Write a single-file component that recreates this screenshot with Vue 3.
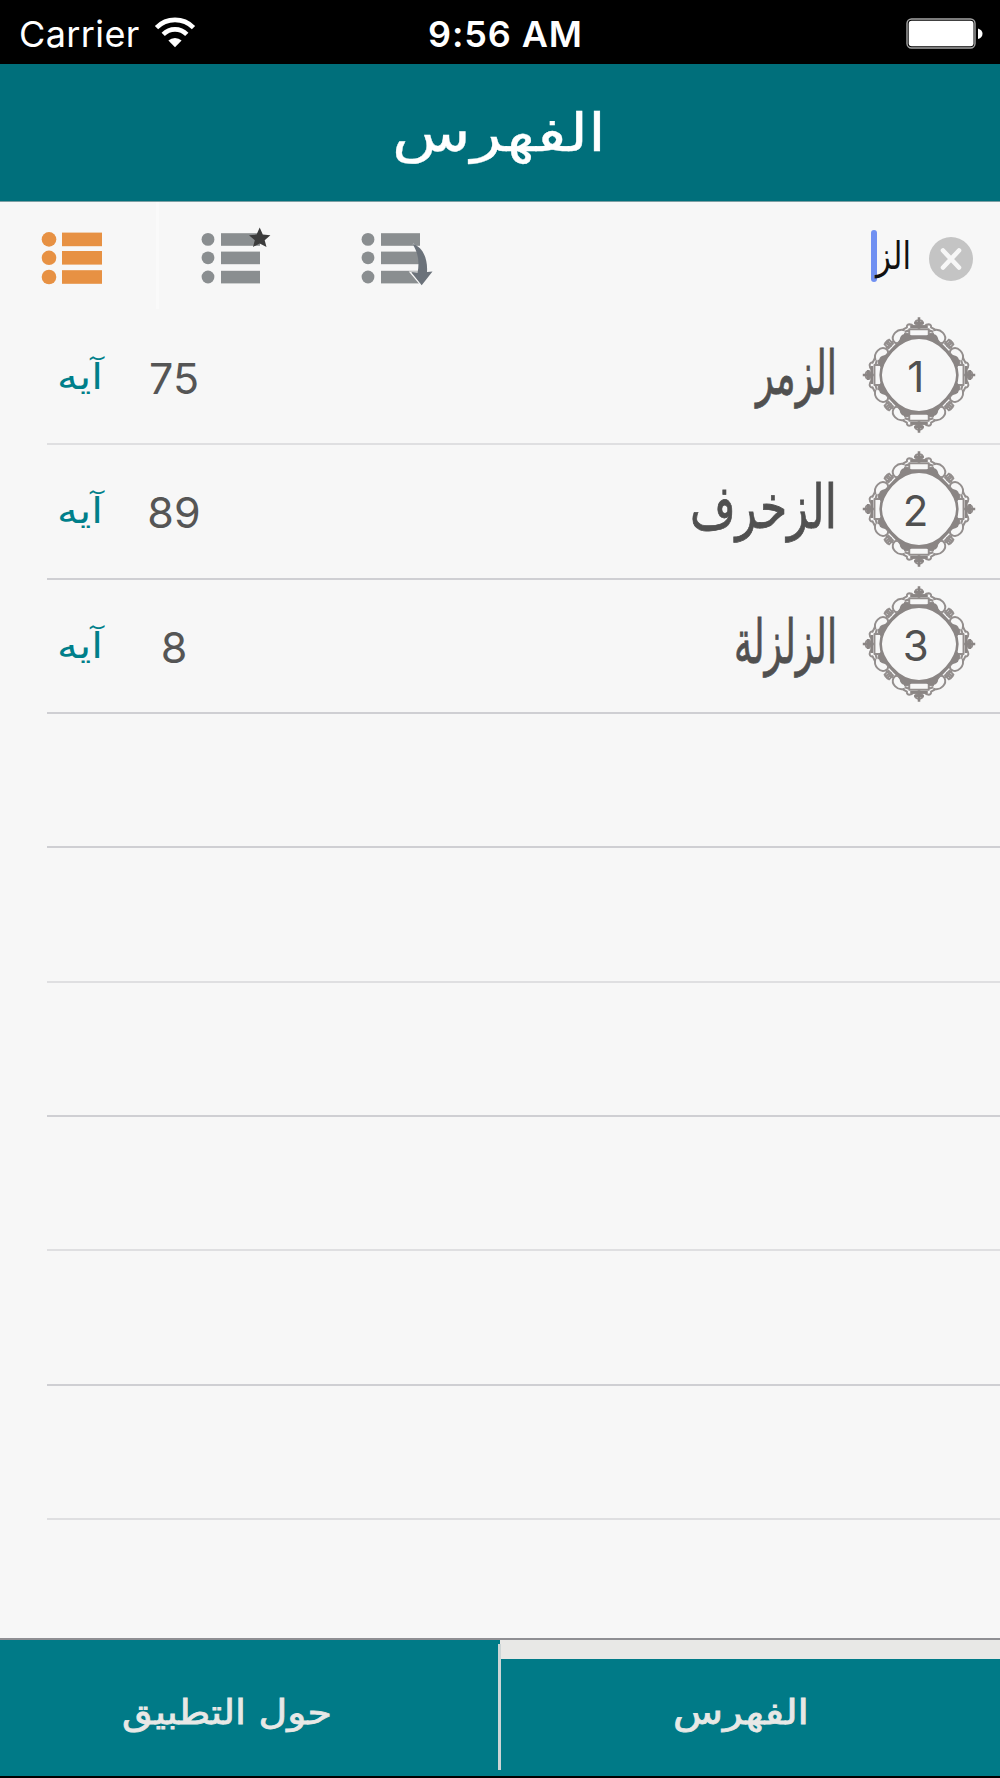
<template>
  <div class="screen">
    <div class="status">
      <span class="carrier">Carrier</span>
      <svg class="wifi" width="40" height="30" viewBox="0 0 40 30">
        <path d="M1.5 8.6 A26 26 0 0 1 38.5 8.6" fill="none" stroke="#fff" stroke-width="4.6" />
        <path d="M8.2 15.3 A16.6 16.6 0 0 1 31.8 15.3" fill="none" stroke="#fff" stroke-width="4.6" />
        <path d="M13.4 21.6 A9.5 9.5 0 0 1 26.6 21.6 L20 28.2 Z" fill="#fff" />
      </svg>
      <span class="clock">9:56 AM</span>
      <svg class="battery" width="78" height="32" viewBox="0 0 78 32">
        <rect x="1" y="1" width="68" height="29" rx="4.5" fill="none" stroke="#a5a5a5" stroke-width="1.4" />
        <rect x="2.7" y="2.7" width="64.8" height="25.6" rx="3" fill="#fff" />
        <path d="M72 10.5 Q76.5 12 76.5 15.7 Q76.5 19.5 72 21 Z" fill="#fff" />
      </svg>
    </div>

    <header class="header">
      <svg width="209" height="80" viewBox="0 0 209 80">
        <text x="-2" y="51" font-size="53" textLength="214" lengthAdjust="spacingAndGlyphs">الفهرس</text>
      </svg>
    </header>

    <div class="toolbar">
      <button v-for="f in filters" :key="f" type="button" class="filter" :class="f">
        <svg width="76" height="62" viewBox="0 0 76 62">
          <template v-for="y in [15.4, 33.8, 53]" :key="y">
            <circle cx="9" :cy="y" :r="f === 'all' ? 7.3 : 6.4" />
            <rect x="22" :y="y - (f === 'all' ? 6.8 : 6.2)" :width="f === 'all' ? 40 : 39" :height="f === 'all' ? 13.6 : 12.6" />
          </template>
          <path v-if="f === 'starred'" class="star" d="M60.7 3.6 L63.8 10.6 L71.4 11.2 L65.7 16.2 L67.5 22.9 L60.7 19.4 L54 22.9 L55.8 16.2 L50 11.2 L57.6 10.6 Z" />
          <template v-if="f === 'recent'">
            <path d="M54 20 C61 26 64 37 63 48 L51 48 L62 61" fill="none" stroke="#f7f7f7" stroke-width="1.2" />
            <path class="arrow" d="M53.5 20 C63 22 69 34 68 48 L73.5 47.5 L62.7 61.3 L52.5 48 L58.6 49 C60.5 38 59.5 29 53.5 20 Z" />
          </template>
        </svg>
      </button>
      <div class="search">
        <span class="caret"></span>
        <svg width="34" height="60" viewBox="0 0 34 60">
          <text x="0" y="41" font-size="38" textLength="35" lengthAdjust="spacingAndGlyphs">الز</text>
        </svg>
        <svg class="clear" width="44" height="44" viewBox="0 0 44 44">
          <circle cx="22" cy="22" r="22" fill="#c4c4c4" />
          <path d="M14 13.5 L30 30.5 M30 13.5 L14 30.5" stroke="#f7f7f7" stroke-width="4.6" stroke-linecap="round" />
        </svg>
      </div>
    </div>

    <main class="list">
      <div v-for="(s, i) in rows" :key="i" class="row">
        <template v-if="s.name">
          <svg class="unit" width="45" height="60" viewBox="0 0 45 60">
            <text x="-1" y="41" font-size="35" textLength="46" lengthAdjust="spacingAndGlyphs">آيه</text>
          </svg>
          <span class="count">{{ s.verses }}</span>
          <svg class="name" :width="s.width" height="90" :viewBox="`0 0 ${s.width} 90`">
            <text x="0" y="62" font-size="60" :textLength="s.width + 1" lengthAdjust="spacingAndGlyphs">{{ s.name }}</text>
          </svg>
          <svg class="frame" width="112" height="116" viewBox="-168 -174 336 348">
            <g transform="scale(0.975 1)">
              <path class="solid" d="M-46 -119 L46 -119 L118 -46 L118 46 L46 119 L-46 119 L-118 46 L-118 -46 Z" />
              <g v-for="a in [0, 90, 180, 270]" :key="a" :transform="`rotate(${a})`">
                <g v-for="m in [1, -1]" :key="m" :transform="`scale(${m} 1)`">
                  <path class="thin" d="M30 -118 V-137 H0 M30 -134 L44 -130 M46 -124 H30" />
                  <path class="thin" d="M0 -146 H16 Q22 -152 30 -152 Q39 -150 37 -143 L50 -136 M0 -151 Q13 -150 11 -159 Q9 -164 0 -164" />
                  <path class="thin" d="M44 -134 C68 -142 86 -118 79 -103 C74 -92 62 -93 56 -102" />
                  <path class="thin" d="M80 -101 L89 -92 L97 -103 L106 -92 L94 -80 L85 -89" />
                  <path class="solid" d="M22 -116 C30 -127 54 -127 58 -112 L62 -96 L40 -104 Z" />
                </g>
                <path class="thick" d="M0 -173 V-139 M-15 -156 H15 M-27 -145 H27" />
              </g>
              <path class="ring" d="M0 -112 C42 -112 66 -92 85 -71 C104 -50 118 -28 118 0 C118 28 104 50 85 71 C66 92 42 112 0 112 C-42 112 -66 92 -85 71 C-104 50 -118 28 -118 0 C-118 -28 -104 -50 -85 -71 C-66 -92 -42 -112 0 -112 Z" />
            </g>
            <text class="number" x="-10" y="51" text-anchor="middle">{{ i + 1 }}</text>
          </svg>
        </template>
      </div>
    </main>

    <nav class="tabs">
      <button type="button" class="tab">
        <svg width="207" height="60" viewBox="0 0 207 60">
          <text x="-2" y="36" font-size="34" textLength="210" lengthAdjust="spacingAndGlyphs">حول التطبيق</text>
        </svg>
      </button>
      <span class="divider"></span>
      <button type="button" class="tab active">
        <svg width="133" height="60" viewBox="0 0 133 60">
          <text x="-2" y="36" font-size="34" textLength="136" lengthAdjust="spacingAndGlyphs">الفهرس</text>
        </svg>
      </button>
    </nav>
  </div>
</template>

<script setup>
  const filters = ['all', 'starred', 'recent']

  const suras = [
    { name: 'الزمر', verses: 75, width: 80 },
    { name: 'الزخرف', verses: 89, width: 146 },
    { name: 'الزلزلة', verses: 8, width: 102 }
  ]

  // the table keeps drawing empty cells down to the tab bar
  const rows = [...suras, ...Array.from({ length: 7 }, () => ({}))]
</script>

<style>
  body { background: #000; }
</style>

<style scoped>
  .screen {
    width: 1000px; height: 1778px; overflow: hidden;
    display: flex; flex-direction: column;
    background: #f7f7f7;
    font-family: Inter, "DejaVu Sans", sans-serif;
  }
  svg { display: block; flex: none; overflow: visible; }
  svg text { font-family: "DejaVu Sans", sans-serif; }
  button { border: 0; padding: 0; background: none; }

  .status {
    height: 64px; flex: none; background: #000; color: #fff;
    display: flex; align-items: center; padding: 4px 16px 0 19px; box-sizing: border-box;
    font-size: 36px; line-height: 1; white-space: nowrap;
  }
  .carrier { width: 136px; font-weight: 400; letter-spacing: 0.4px; }
  .clock { margin-left: 233px; font-weight: 600; width: 160px; letter-spacing: 0.9px; }
  .battery { margin-left: auto; }

  .header {
    height: 138px; flex: none; box-sizing: border-box;
    display: flex; justify-content: center; padding: 36px 3px 0 0;
    background: #006f7b; border-bottom: 1px solid #7c9fa3;
  }
  .header text { fill: #fff; stroke: #fff; stroke-width: 0.3; }

  .toolbar { height: 108px; flex: none; display: flex; align-items: flex-start; }
  .filter { height: 107px; width: 159.3px; display: flex; padding: 22px 0 0 40px; box-sizing: border-box; fill: #8a8e90; }
  .filter.all { border-right: 3px solid #fafafa; fill: #e79143; }
  .star { fill: #3c3c3c; }
  .arrow { fill: #6b727a; }
  .search { margin-left: auto; display: flex; align-items: flex-start; padding: 26px 27px 0 0; }
  .search text { fill: #111; }
  .caret { width: 6px; height: 52px; margin: 2px -1px 0 0; border-radius: 3px; background: #7090f2; }
  .clear { margin: 9px 0 0 19px; }

  .list { flex: 1; min-height: 0; overflow: hidden; padding-top: 1px; }
  .row {
    height: 134.35px; margin-left: 47px; padding: 0 25px 0 11px; box-sizing: border-box;
    display: flex; align-items: flex-start;
    border-bottom: 2px solid #dfdfe1;
  }
  .row:nth-child(even), .row:nth-child(3) { border-bottom-color: #cfcfd3; }
  .unit { margin-top: 37px; }
  .unit text { fill: #007f8a; }
  .count {
    width: 100px; margin: 46px 0 0 21px; text-align: center;
    font-size: 43px; line-height: 43px; font-weight: 400; color: #555;
  }
  .name { margin: 21px 27px 0 auto; }
  .name text { fill: #505050; stroke: #505050; stroke-width: 0.8; }
  .frame { margin-top: 6px; }
  .thin { fill: none; stroke: #938e8d; stroke-width: 6; stroke-linejoin: round; }
  .thick { fill: none; stroke: #8a8584; stroke-width: 8; }
  .solid { fill: #8a8584; }
  .ring { fill: #f7f7f7; stroke: #8a8584; stroke-width: 8; }
  .number { font: 400 126px Inter, sans-serif; fill: #505050; }

  .tabs {
    height: 140px; flex: none; box-sizing: border-box; display: flex;
    background: #007a87; border-top: 2px solid #8f8f93; border-bottom: 2px solid #000;
  }
  .tab { width: 500px; flex: none; box-sizing: border-box; padding: 48px 46px 0 0; display: flex; justify-content: center; align-items: flex-start; }
  .tab.active { padding: 29px 17px 0 0; border-top: 19px solid #e8e8e6; }
  .tab text { fill: #e8e8e6; stroke: #e8e8e6; stroke-width: 0.8; }
  .divider { width: 3px; height: 126px; margin: 4px -1px 0 -2px; background: #ccd5d6; position: relative; }
</style>
